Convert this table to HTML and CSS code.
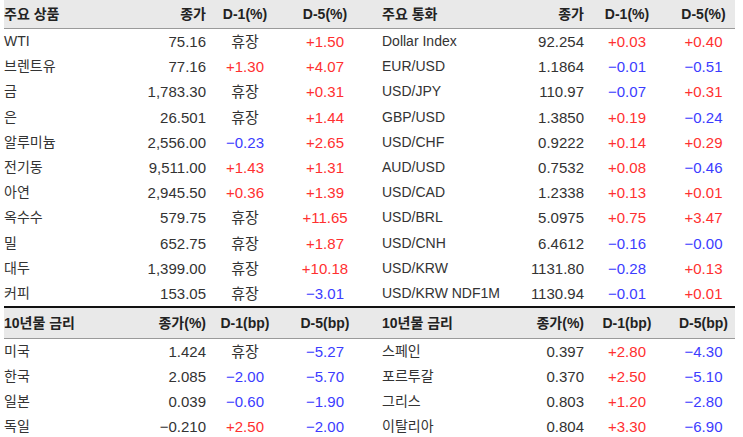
FILE: index.html
```html
<!DOCTYPE html>
<html lang="ko">
<head>
<meta charset="utf-8">
<link rel="stylesheet" href="styles.css">
</head>
<body>
<table class="mkt">
<colgroup>
<col class="c1"><col class="c2"><col class="c3"><col class="c4"><col class="c5"><col class="c6"><col class="c7"><col class="c8">
</colgroup>
<thead>
<tr class="hd">
<th class="nm">주요 상품</th><th class="px">종가</th><th class="ct">D-1(%)</th><th class="ct">D-5(%)</th>
<th class="nm r">주요 통화</th><th class="px r">종가</th><th class="ct">D-1(%)</th><th class="ct l">D-5(%)</th>
</tr>
</thead>
<tbody>
<tr><td class="nm">WTI</td><td class="px">75.16</td><td class="ct">휴장</td><td class="ct up">+1.50</td><td class="nm r">Dollar Index</td><td class="px r">92.254</td><td class="ct up">+0.03</td><td class="ct l up">+0.40</td></tr>
<tr><td class="nm">브렌트유</td><td class="px">77.16</td><td class="ct up">+1.30</td><td class="ct up">+4.07</td><td class="nm r">EUR/USD</td><td class="px r">1.1864</td><td class="ct dn">−0.01</td><td class="ct l dn">−0.51</td></tr>
<tr><td class="nm">금</td><td class="px">1,783.30</td><td class="ct">휴장</td><td class="ct up">+0.31</td><td class="nm r">USD/JPY</td><td class="px r">110.97</td><td class="ct dn">−0.07</td><td class="ct l up">+0.31</td></tr>
<tr><td class="nm">은</td><td class="px">26.501</td><td class="ct">휴장</td><td class="ct up">+1.44</td><td class="nm r">GBP/USD</td><td class="px r">1.3850</td><td class="ct up">+0.19</td><td class="ct l dn">−0.24</td></tr>
<tr><td class="nm">알루미늄</td><td class="px">2,556.00</td><td class="ct dn">−0.23</td><td class="ct up">+2.65</td><td class="nm r">USD/CHF</td><td class="px r">0.9222</td><td class="ct up">+0.14</td><td class="ct l up">+0.29</td></tr>
<tr><td class="nm">전기동</td><td class="px">9,511.00</td><td class="ct up">+1.43</td><td class="ct up">+1.31</td><td class="nm r">AUD/USD</td><td class="px r">0.7532</td><td class="ct up">+0.08</td><td class="ct l dn">−0.46</td></tr>
<tr><td class="nm">아연</td><td class="px">2,945.50</td><td class="ct up">+0.36</td><td class="ct up">+1.39</td><td class="nm r">USD/CAD</td><td class="px r">1.2338</td><td class="ct up">+0.13</td><td class="ct l up">+0.01</td></tr>
<tr><td class="nm">옥수수</td><td class="px">579.75</td><td class="ct">휴장</td><td class="ct up">+11.65</td><td class="nm r">USD/BRL</td><td class="px r">5.0975</td><td class="ct up">+0.75</td><td class="ct l up">+3.47</td></tr>
<tr><td class="nm">밀</td><td class="px">652.75</td><td class="ct">휴장</td><td class="ct up">+1.87</td><td class="nm r">USD/CNH</td><td class="px r">6.4612</td><td class="ct dn">−0.16</td><td class="ct l dn">−0.00</td></tr>
<tr><td class="nm">대두</td><td class="px">1,399.00</td><td class="ct">휴장</td><td class="ct up">+10.18</td><td class="nm r">USD/KRW</td><td class="px r">1131.80</td><td class="ct dn">−0.28</td><td class="ct l up">+0.13</td></tr>
<tr><td class="nm">커피</td><td class="px">153.05</td><td class="ct">휴장</td><td class="ct dn">−3.01</td><td class="nm r">USD/KRW NDF1M</td><td class="px r">1130.94</td><td class="ct dn">−0.01</td><td class="ct l up">+0.01</td></tr>
</tbody>
<tbody class="sec">
<tr class="hd">
<th class="nm">10년물 금리</th><th class="px">종가(%)</th><th class="ct">D-1(bp)</th><th class="ct">D-5(bp)</th>
<th class="nm r">10년물 금리</th><th class="px r">종가(%)</th><th class="ct">D-1(bp)</th><th class="ct l">D-5(bp)</th>
</tr>
<tr><td class="nm">미국</td><td class="px">1.424</td><td class="ct">휴장</td><td class="ct dn">−5.27</td><td class="nm r">스페인</td><td class="px r">0.397</td><td class="ct up">+2.80</td><td class="ct l dn">−4.30</td></tr>
<tr><td class="nm">한국</td><td class="px">2.085</td><td class="ct dn">−2.00</td><td class="ct dn">−5.70</td><td class="nm r">포르투갈</td><td class="px r">0.370</td><td class="ct up">+2.50</td><td class="ct l dn">−5.10</td></tr>
<tr><td class="nm">일본</td><td class="px">0.039</td><td class="ct dn">−0.60</td><td class="ct dn">−1.90</td><td class="nm r">그리스</td><td class="px r">0.803</td><td class="ct up">+1.20</td><td class="ct l dn">−2.80</td></tr>
<tr><td class="nm">독일</td><td class="px">−0.210</td><td class="ct up">+2.50</td><td class="ct dn">−2.00</td><td class="nm r">이탈리아</td><td class="px r">0.804</td><td class="ct up">+3.30</td><td class="ct l dn">−6.90</td></tr>
</tbody>
</table>
</body>
</html>
```

FILE: styles.css
```css
html, body {
  margin: 0;
  padding: 0;
  background: #ffffff;
}
body {
  padding: 0 0 0 4px;
  font-family: "Liberation Sans", "Noto Sans CJK KR", sans-serif;
  color: #333333;
}
.mkt {
  border-collapse: collapse;
  table-layout: fixed;
  width: 731px;
  font-size: 14px;
}
.c1 { width: 116px; }
.c2 { width: 86px; }
.c3 { width: 78px; }
.c4 { width: 82px; }
.c5 { width: 134px; }
.c6 { width: 90px; }
.c7 { width: 74px; }
.c8 { width: 71px; }
.mkt th, .mkt td {
  padding: 0;
  white-space: nowrap;
  overflow: visible;
}
.mkt td {
  height: 25.2px;
  line-height: 25px;
}
.hd th {
  height: 28px;
  line-height: 28px;
  background: #e9e9e9;
  border-bottom: 1px solid #9a9a9a;
  font-weight: bold;
  color: #222222;
}
.sec .hd th {
  border-top: 2px solid #111111;
  height: 30px;
  line-height: 30px;
}
.sec td {
  height: 25px;
}
.nm { text-align: left; padding-left: 1px; }
.nm.r { padding-left: 16px; }
.px { text-align: right; padding-right: 3px; }
.px.r { padding-right: 6px; }
.ct { text-align: center; }
.ct.l { padding-left: 8px; }
td.px { font-size: 15px; }
td.ct { font-size: 15px; }
.up { color: #ff3030; }
.dn { color: #3c3cff; }
```
